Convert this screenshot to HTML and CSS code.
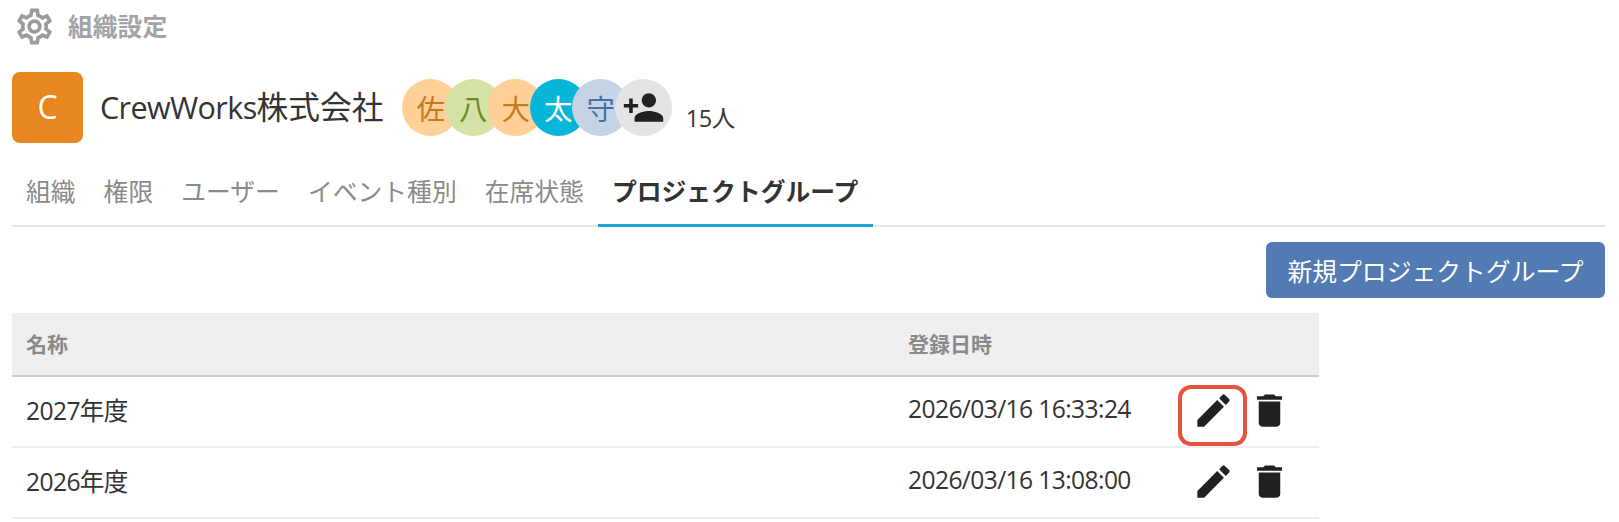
FILE: index.html
```html
<!DOCTYPE html>
<html lang="ja">
<head>
  <meta charset="UTF-8">
  <link rel="stylesheet" href="styles.css">
  <title>組織設定</title>
</head>
<body>
  <div class="page_title">
    <svg class="gear_icon" viewBox="0 0 24 24"><path d="M19.43 12.98c.04-.32.07-.64.07-.98 0-.34-.03-.66-.07-.98l2.11-1.65c.19-.15.24-.42.12-.64l-2-3.46c-.09-.16-.26-.25-.44-.25-.06 0-.12.01-.17.03l-2.49 1c-.52-.4-1.08-.73-1.69-.98l-.38-2.65C14.46 2.18 14.25 2 14 2h-4c-.25 0-.46.18-.49.42l-.38 2.65c-.61.25-1.17.59-1.69.98l-2.49-1c-.06-.02-.12-.03-.18-.03-.17 0-.34.09-.43.25l-2 3.46c-.13.22-.07.49.12.64l2.11 1.65c-.04.32-.07.65-.07.98 0 .33.03.66.07.98l-2.11 1.65c-.19.15-.24.42-.12.64l2 3.46c.09.16.26.25.44.25.06 0 .12-.01.17-.03l2.49-1c.52.4 1.08.73 1.69.98l.38 2.65c.03.24.24.42.49.42h4c.25 0 .46-.18.49-.42l.38-2.65c.61-.25 1.17-.59 1.69-.98l2.49 1c.06.02.12.03.18.03.17 0 .34-.09.43-.25l2-3.46c.12-.22.07-.49-.12-.64l-2.11-1.65zm-1.98-1.71c.04.31.05.52.05.73 0 .21-.02.43-.05.73l-.14 1.13.89.7 1.08.84-.7 1.21-1.27-.51-1.04-.42-.9.68c-.43.32-.84.56-1.25.73l-1.06.43-.16 1.13-.2 1.35h-1.4l-.19-1.35-.16-1.13-1.06-.43c-.43-.18-.83-.41-1.23-.71l-.91-.7-1.06.43-1.27.51-.7-1.21 1.08-.84.89-.7-.14-1.13c-.03-.31-.05-.54-.05-.74s.02-.43.05-.73l.14-1.13-.89-.7-1.08-.84.7-1.21 1.27.51 1.04.42.9-.68c.43-.32.84-.56 1.25-.73l1.06-.43.16-1.13.2-1.35h1.39l.19 1.35.16 1.13 1.06.43c.43.18.83.41 1.23.71l.91.7 1.06-.43 1.27-.51.7 1.21-1.07.85-.89.7.14 1.13zM12 8c-2.21 0-4 1.79-4 4s1.79 4 4 4 4-1.79 4-4-1.79-4-4-4zm0 6c-1.1 0-2-.9-2-2s.9-2 2-2 2 .9 2 2-.9 2-2 2z"/></svg>
    <span class="title_text">組織設定</span>
  </div>

  <div class="org_header">
    <div class="org_logo">C</div>
    <div class="org_name"><span class="org_latin">CrewWorks</span>株式会社</div>
    <div class="member_list">
      <div class="member member_orange">佐</div>
      <div class="member member_green">八</div>
      <div class="member member_orange">大</div>
      <div class="member member_cyan">太</div>
      <div class="member member_blue">守</div>
      <div class="member member_add">
        <svg class="add_icon" viewBox="0 0 24 24"><path d="M15 12c2.21 0 4-1.79 4-4s-1.79-4-4-4-4 1.79-4 4 1.79 4 4 4zm-9-2V7H4v3H1v2h3v3h2v-3h3v-2H6zm9 4c-2.67 0-8 1.34-8 4v2h16v-2c0-2.66-5.33-4-8-4z"/></svg>
      </div>
    </div>
    <div class="member_count">15人</div>
  </div>

  <div class="tabs">
    <div class="tab">組織</div>
    <div class="tab">権限</div>
    <div class="tab">ユーザー</div>
    <div class="tab">イベント種別</div>
    <div class="tab">在席状態</div>
    <div class="tab tab_active">プロジェクトグループ</div>
  </div>

  <div class="toolbar">
    <button class="new_group">新規プロジェクトグループ</button>
  </div>

  <table class="group_table">
    <thead>
      <tr>
        <th class="col_name">名称</th>
        <th class="col_date">登録日時</th>
        <th></th>
      </tr>
    </thead>
    <tbody>
      <tr>
        <td>2027年度</td>
        <td>2026/03/16 16:33:24</td>
        <td class="actions_cell">
          <div class="row_actions">
            <button class="icon_button marked"><svg viewBox="0 0 24 24"><path d="M3 17.25V21h3.75L17.81 9.94l-3.75-3.75L3 17.25zM20.71 7.04c.39-.39.39-1.02 0-1.41l-2.34-2.34c-.39-.39-1.02-.39-1.41 0l-1.83 1.83 3.75 3.75 1.83-1.83z"/></svg></button>
            <button class="icon_button"><svg viewBox="0 0 24 24"><path d="M6 19c0 1.1.9 2 2 2h8c1.1 0 2-.9 2-2V7H6v12zM19 4h-3.5l-1-1h-5l-1 1H5v2h14V4z"/></svg></button>
          </div>
        </td>
      </tr>
      <tr>
        <td>2026年度</td>
        <td>2026/03/16 13:08:00</td>
        <td class="actions_cell">
          <div class="row_actions">
            <button class="icon_button"><svg viewBox="0 0 24 24"><path d="M3 17.25V21h3.75L17.81 9.94l-3.75-3.75L3 17.25zM20.71 7.04c.39-.39.39-1.02 0-1.41l-2.34-2.34c-.39-.39-1.02-.39-1.41 0l-1.83 1.83 3.75 3.75 1.83-1.83z"/></svg></button>
            <button class="icon_button"><svg viewBox="0 0 24 24"><path d="M6 19c0 1.1.9 2 2 2h8c1.1 0 2-.9 2-2V7H6v12zM19 4h-3.5l-1-1h-5l-1 1H5v2h14V4z"/></svg></button>
          </div>
        </td>
      </tr>
    </tbody>
  </table>
</body>
</html>
```

FILE: styles.css
```css
/* Basics */
body {
  margin: 0;
  padding: 0 14px 0 12px;
  font-family: "Open Sans", "Noto Sans CJK JP", sans-serif;
  background-color: #ffffff;
  color: #333333;
}

button {
  font-family: inherit;
  border: none;
  cursor: pointer;
}

/* Page Title */
.page_title {
  display: flex;
  align-items: center;
  gap: 12px;
  height: 52px;
  font-size: 24.8px;
  font-weight: bold;
  color: #a3a3a3;
}

.title_text {
  padding-bottom: 2px;
}

.gear_icon {
  width: 43px;
  height: 43px;
  margin-left: 1px;
  fill: #9b9b9b;
}

/* Org Header */
.org_header {
  display: flex;
  align-items: center;
  height: 71px;
  margin-top: 20px;
}

.org_logo {
  display: flex;
  justify-content: center;
  align-items: center;
  width: 71px;
  height: 71px;
  padding-bottom: 3px;
  box-sizing: border-box;
  border-radius: 8px;
  background-color: #e8861f;
  color: #ffffff;
  font-size: 32px;
}

.org_name {
  margin-left: 17px;
  padding-bottom: 5px;
  font-size: 31.7px;
  color: #333333;
}

.org_latin {
  font-size: 30.5px;
  letter-spacing: -0.6px;
}

.member_list {
  display: flex;
  margin-left: 19px;
}

.member {
  display: flex;
  justify-content: center;
  align-items: center;
  width: 57px;
  height: 57px;
  margin-right: -14.5px;
  border-radius: 50%;
  font-size: 28.5px;
}

.member_orange {
  background-color: #ffd199;
  color: #c67a20;
}

.member_green {
  background-color: #d4e2a6;
  color: #6f8a2e;
}

.member_cyan {
  background-color: #06b6d8;
  color: #ffffff;
}

.member_blue {
  background-color: #c5d3e6;
  color: #4a6fa5;
}

.member_add {
  background-color: #e3e3e3;
  margin-right: 0;
}

.add_icon {
  width: 43px;
  height: 43px;
  fill: #212121;
}

.member_count {
  align-self: flex-end;
  margin-left: 14px;
  margin-bottom: 11px;
  font-size: 23.5px;
  letter-spacing: -0.5px;
  line-height: 28px;
}

/* Tabs */
.tabs {
  display: flex;
  height: 84px;
  box-sizing: border-box;
  border-bottom: 2px solid #e6e6e6;
}

.tab {
  padding: 30px 14px 0;
  font-size: 24.8px;
  line-height: 36px;
  color: #8a8a8a;
}

.tab_active {
  height: 84px;
  padding-right: 15px;
  box-sizing: border-box;
  border-bottom: 3px solid #1fa3d6;
  font-weight: bold;
  color: #333333;
}

/* Toolbar */
.toolbar {
  display: flex;
  justify-content: flex-end;
  margin-top: 15px;
}

.new_group {
  width: 339px;
  height: 56px;
  padding: 0;
  border-radius: 6px;
  background-color: #527ab3;
  color: #ffffff;
  font-size: 24.8px;
}

/* Table */
.group_table {
  width: 1307px;
  margin-top: 15px;
  border-collapse: collapse;
  table-layout: fixed;
}

.group_table th {
  height: 60px;
  padding: 0 14px 2px;
  background-color: #efefef;
  border-bottom: 2px solid #cccccc;
  text-align: left;
  font-size: 21px;
  color: #8a8a8a;
}

.group_table td {
  height: 63px;
  padding: 0 14px 6px;
  border-bottom: 2px solid #eeeeee;
  font-size: 24.6px;
  letter-spacing: -0.6px;
  color: #333333;
}

.col_name {
  width: 854px;
}

.col_date {
  width: 262px;
}

.group_table .actions_cell {
  padding-bottom: 2px;
}

.row_actions {
  display: flex;
  margin-left: -13px;
}

.icon_button {
  position: relative;
  display: flex;
  justify-content: center;
  align-items: center;
  width: 56px;
  height: 57px;
  padding: 0;
  background: none;
}

.icon_button svg {
  width: 43px;
  height: 43px;
  fill: #212121;
}

/* red annotation around the edit button */
.marked::after {
  content: "";
  position: absolute;
  top: 3px;
  left: -7px;
  width: 61px;
  height: 53px;
  border: 4px solid #e5533d;
  border-radius: 13px;
}
```
